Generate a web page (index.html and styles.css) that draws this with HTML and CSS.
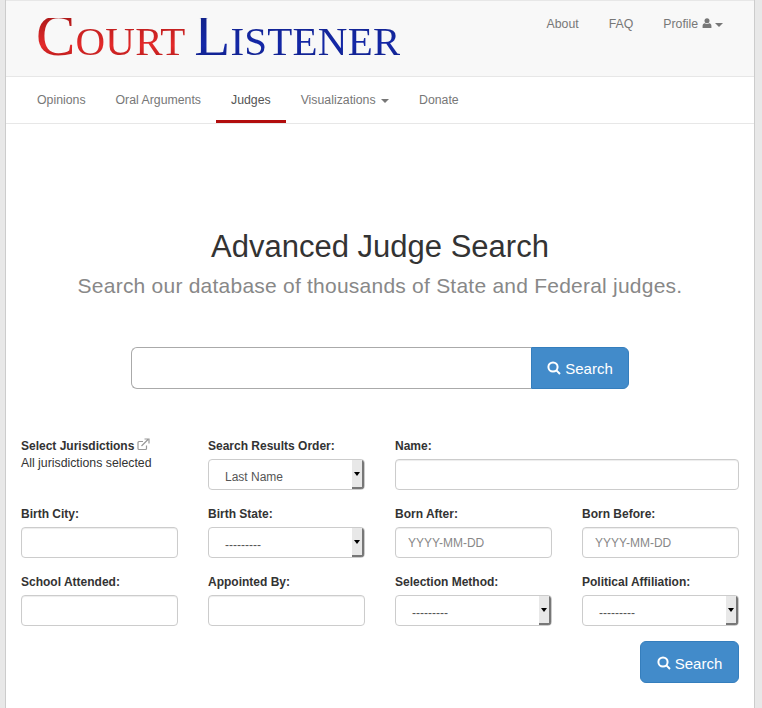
FILE: index.html
```html
<!DOCTYPE html>
<html lang="en">
<head>
  <meta charset="UTF-8">
  <title>Advanced Judge Search – CourtListener</title>
  <link rel="stylesheet" href="styles.css">
</head>
<body>
<div class="page">
  <header class="masthead">
    <a class="logo"><span class="logo-red"><span class="cap">C</span>ourt</span> <span class="logo-blue"><span class="cap">L</span>istener</span></a>
    <nav class="top-links">
      <a>About</a>
      <a>FAQ</a>
      <a>Profile
        <svg class="user-icon" viewBox="0 0 12 12"><circle cx="6" cy="3.2" r="3"/><path d="M0.7 12V9.2C0.7 7.2 2 6.2 3.4 6.2 4 6.8 5 7.2 6 7.2S8 6.8 8.6 6.2C10 6.2 11.3 7.2 11.3 9.2V12Z"/></svg>
        <i class="caret"></i></a>
    </nav>
  </header>

  <nav class="main-nav">
    <a>Opinions</a>
    <a>Oral Arguments</a>
    <a class="active">Judges</a>
    <a>Visualizations <i class="caret"></i></a>
    <a>Donate</a>
  </nav>

  <section class="intro">
    <h1>Advanced Judge Search</h1>
    <h2>Search our database of thousands of State and Federal judges.</h2>
  </section>

  <div class="main-search">
    <input type="text" class="main-input">
    <button class="btn btn-attached">
      <svg class="search-icon" viewBox="0 0 14 14"><circle cx="6" cy="6" r="4.6"/><path d="M9.4 9.4L13 13"/></svg>
      Search</button>
  </div>

  <form class="filters">
    <div class="field">
      <div class="label">Select Jurisdictions
        <svg class="ext-icon" viewBox="0 0 13 13"><path d="M9.5 7.5V10.5C9.5 11.2 9 11.5 8.5 11.5H2C1.4 11.5 1 11.1 1 10.5V4.5C1 3.9 1.4 3.5 2 3.5H6"/><path d="M4.5 8L11 1.5M7.5 1H12V5.5"/></svg>
      </div>
      <div class="note">All jurisdictions selected</div>
    </div>
    <div class="field">
      <div class="label">Search Results Order:</div>
      <div class="select"><span class="select-value">Last Name</span><span class="select-arrow"></span></div>
    </div>
    <div class="field wide">
      <div class="label">Name:</div>
      <input type="text" class="input">
    </div>

    <div class="field">
      <div class="label">Birth City:</div>
      <input type="text" class="input">
    </div>
    <div class="field">
      <div class="label">Birth State:</div>
      <div class="select"><span class="select-value">---------</span><span class="select-arrow"></span></div>
    </div>
    <div class="field">
      <div class="label">Born After:</div>
      <input type="text" class="input" placeholder="YYYY-MM-DD">
    </div>
    <div class="field">
      <div class="label">Born Before:</div>
      <input type="text" class="input" placeholder="YYYY-MM-DD">
    </div>

    <div class="field">
      <div class="label">School Attended:</div>
      <input type="text" class="input">
    </div>
    <div class="field">
      <div class="label">Appointed By:</div>
      <input type="text" class="input">
    </div>
    <div class="field">
      <div class="label">Selection Method:</div>
      <div class="select"><span class="select-value">---------</span><span class="select-arrow"></span></div>
    </div>
    <div class="field">
      <div class="label">Political Affiliation:</div>
      <div class="select"><span class="select-value">---------</span><span class="select-arrow"></span></div>
    </div>

    <div class="form-actions">
      <button class="btn btn-submit">
        <svg class="search-icon" viewBox="0 0 14 14"><circle cx="6" cy="6" r="4.6"/><path d="M9.4 9.4L13 13"/></svg>
        Search</button>
    </div>
  </form>
</div>
</body>
</html>
```

FILE: styles.css
```css
* { box-sizing: border-box; }
html, body { height: 100%; }
body { margin: 0; background: #e8e8e8; font-family: "Liberation Sans", Arial, sans-serif; font-size: 12px; color: #333; overflow: hidden; }
.page { width: 750px; height: 708px; margin-left: 5px; background: #fff; border: 1px solid #ccc; border-width: 0 1px; overflow: hidden; }

.masthead { display: flex; justify-content: space-between; height: 77px; background: #f8f8f8; border-top: 1px solid #e7e7e7; border-bottom: 1px solid #e7e7e7; padding-left: 30px; }
.logo { font-family: "Liberation Serif", serif; font-size: 41px; line-height: 1; padding-top: 5px; white-space: nowrap; letter-spacing: 0.2px; word-spacing: -1px; }
.logo .cap { font-size: 59px; }
.logo span { text-transform: uppercase; }
.logo-red { background: linear-gradient(180deg, #b01a1a, #e42a2a 60%, #a81616); -webkit-background-clip: text; background-clip: text; color: transparent; }
.logo-blue { background: linear-gradient(180deg, #12238c, #1428a8 60%, #101f80); -webkit-background-clip: text; background-clip: text; color: transparent; }

.top-links { display: flex; gap: 30px; padding: 16px 31px 0 0; color: #777; line-height: 14px; font-size: 12.3px; }
.user-icon { width: 10px; height: 10px; fill: #777; }
.caret { display: inline-block; width: 0; height: 0; margin-left: 0; vertical-align: middle; border-top: 4px solid #777; border-left: 4px solid transparent; border-right: 4px solid transparent; }

.main-nav { display: flex; height: 47px; border-bottom: 1px solid #e7e7e7; padding-left: 16px; color: #777; font-size: 12.3px; }
.main-nav a { padding: 16px 15px 0; line-height: 14px; }
.main-nav .caret { margin-left: 2px; }
.main-nav .active { color: #555; border-bottom: 3px solid #b20d0d; }

.intro { text-align: center; padding-top: 106px; }
.intro h1 { margin: 0; font-size: 31px; font-weight: 400; line-height: 33px; }
.intro h2 { margin: 12px 0 0; font-size: 21px; font-weight: 400; line-height: 22px; color: #888; letter-spacing: 0.23px; }

.main-search { display: flex; width: 498px; height: 42px; margin: 50px 0 0 125px; }
.main-input { flex: 1; min-width: 0; border: 1px solid #aaa; border-right: 0; border-radius: 6px 0 0 6px; background: #fff; }

.btn { display: flex; align-items: center; justify-content: center; gap: 4px; background: #428bca; border: 1px solid #357ebd; color: #fff; font-family: inherit; font-size: 15px; padding: 0; }
.btn-attached { width: 98px; border-radius: 0 6px 6px 0; }
.btn-submit { width: 99px; height: 42px; border-radius: 6px; padding-top: 2px; }
.search-icon { width: 14px; height: 14px; fill: none; stroke: #fff; stroke-width: 2; }

.filters { display: grid; grid-template-columns: repeat(4, 157px); column-gap: 30px; row-gap: 16px; padding: 49px 15px 0; }
.wide { grid-column: span 2; }
.label { height: 16px; font-weight: 700; line-height: 16px; margin-bottom: 5px; white-space: nowrap; }
.note { line-height: 17px; margin-top: -4px; font-size: 12.3px; }
.ext-icon { width: 13px; height: 13px; fill: none; stroke: #999; stroke-width: 1.2; vertical-align: -1px; margin-left: -1px; }

.input { display: block; width: 100%; height: 31px; border: 1px solid #ccc; border-radius: 4px; background: #fff; box-shadow: inset 0 1px 1px rgba(0,0,0,.075); padding: 0 12px; font-family: inherit; font-size: 12px; }
.input::placeholder { color: #888; }

.select { display: flex; justify-content: space-between; height: 31px; border: 1px solid #ccc; border-radius: 4px; background: #fff; overflow: hidden; color: #555; }
.select-value { padding-left: 16px; line-height: 34px; }
.select-arrow { position: relative; width: 12px; background: #e8e8e8; border-right: 2px solid #777; border-bottom: 2px solid #777; }
.select-arrow::after { content: ""; position: absolute; top: 12px; left: 2px; border-top: 4px solid #000; border-left: 3px solid transparent; border-right: 3px solid transparent; }

.form-actions { grid-column: 1 / -1; display: flex; justify-content: flex-end; margin-top: -1px; }
```
